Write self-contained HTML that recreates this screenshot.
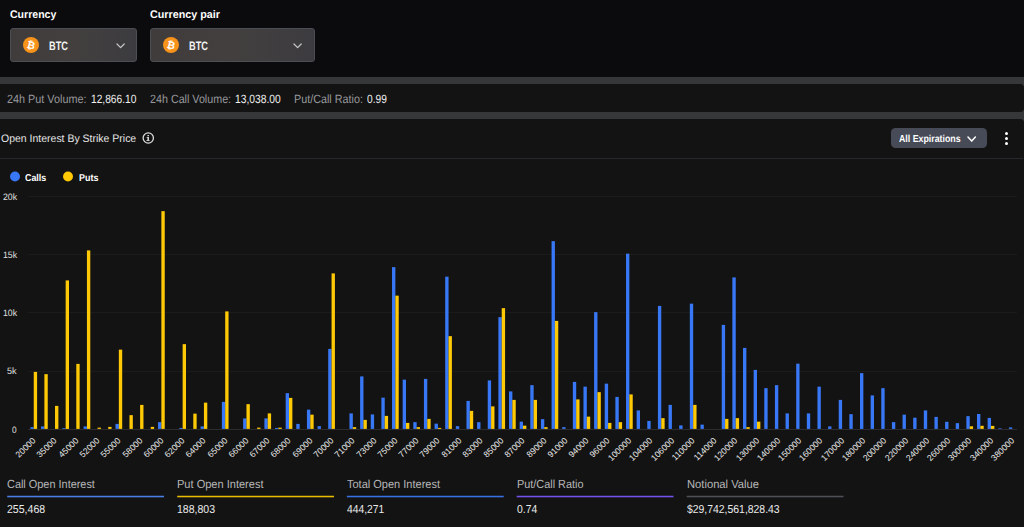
<!DOCTYPE html><html><head><meta charset="utf-8"><title>Open Interest By Strike Price</title><style>
html,body{margin:0;padding:0;}
body{width:1024px;height:527px;overflow:hidden;background:#0b0b0d;font-family:"Liberation Sans",sans-serif;position:relative;}
.t{position:absolute;white-space:nowrap;transform-origin:0 50%;line-height:16px;text-rendering:geometricPrecision;}
.a{position:absolute;}
.sel{position:absolute;top:27.8px;height:33.9px;box-sizing:border-box;border:1px solid #4c4e56;border-radius:3px;
background:linear-gradient(90deg,#3f3c3b 0%,#433f3e 45%,#403e3f 70%,#3c3b3f 100%);}
.b{position:absolute;width:3.35px;}
.c{background:#3878f6;}
.p{background:#ffca05;}
.xl{position:absolute;white-space:nowrap;font-size:8.6px;line-height:10px;color:#ececec;transform-origin:100% 50%;transform:rotate(-45deg);text-align:right;}

</style></head><body>
<div class="a" style="left:0;top:77px;width:1024px;height:450px;background:#363739;"></div>
<div class="a" style="left:0;top:84px;width:1023.8px;height:28px;background:#131313;border-radius:0 4px 4px 0;"></div>
<div class="a" style="left:0;top:118.6px;width:1023.8px;height:409px;background:#131313;border-radius:0 4px 0 0;"></div>
<div class="t" style="left:10.40px;top:7px;font-size:11.0px;color:#fff;font-weight:700;transform:scaleX(0.9587);">Currency</div>
<div class="t" style="left:149.70px;top:7px;font-size:11.0px;color:#fff;font-weight:700;transform:scaleX(0.9773);">Currency pair</div>
<div class="sel" style="left:10px;width:127.3px;"></div>
<div class="sel" style="left:149.7px;width:165.2px;"></div>
<svg class="a" style="left:23.4px;top:36.6px" width="16" height="16" viewBox="0 0 16 16"><circle cx="8" cy="8" r="8" fill="#f7931a"/><text x="8.2" y="11.6" font-family="Liberation Sans, sans-serif" font-size="10" font-weight="700" fill="#fff" text-anchor="middle" transform="rotate(14 8 8)">₿</text></svg>
<svg class="a" style="left:163.0px;top:36.6px" width="16" height="16" viewBox="0 0 16 16"><circle cx="8" cy="8" r="8" fill="#f7931a"/><text x="8.2" y="11.6" font-family="Liberation Sans, sans-serif" font-size="10" font-weight="700" fill="#fff" text-anchor="middle" transform="rotate(14 8 8)">₿</text></svg>
<div class="t" style="left:48.90px;top:38px;font-size:12.2px;color:#f2f2f2;font-weight:700;transform:scaleX(0.7586);">BTC</div>
<div class="t" style="left:188.70px;top:38px;font-size:12.2px;color:#f2f2f2;font-weight:700;transform:scaleX(0.7586);">BTC</div>
<svg class="a" style="left:114.7px;top:42.0px" width="11.2" height="7.6" viewBox="-2 -2 11.2 7.6"><path d="M0 0 L3.6 3.6 L7.2 0" fill="none" stroke="#c6c6ca" stroke-width="1.25" stroke-linecap="round" stroke-linejoin="round"/></svg>
<svg class="a" style="left:292.4px;top:42.0px" width="11.2" height="7.6" viewBox="-2 -2 11.2 7.6"><path d="M0 0 L3.6 3.6 L7.2 0" fill="none" stroke="#c6c6ca" stroke-width="1.25" stroke-linecap="round" stroke-linejoin="round"/></svg>
<div class="t" style="left:7.40px;top:91px;font-size:12px;color:#96979b;transform:scaleX(0.9028);">24h Put Volume:</div>
<div class="t" style="left:91.40px;top:91px;font-size:12px;color:#f0f0f0;transform:scaleX(0.8486);">12,866.10</div>
<div class="t" style="left:149.60px;top:91px;font-size:12px;color:#96979b;transform:scaleX(0.8940);">24h Call Volume:</div>
<div class="t" style="left:235.20px;top:91px;font-size:12px;color:#f0f0f0;transform:scaleX(0.8560);">13,038.00</div>
<div class="t" style="left:294.10px;top:91px;font-size:12px;color:#96979b;transform:scaleX(0.8983);">Put/Call Ratio:</div>
<div class="t" style="left:366.50px;top:91px;font-size:12px;color:#f0f0f0;transform:scaleX(0.8478);">0.99</div>
<div class="t" style="left:1.20px;top:131px;font-size:10.9px;color:#e6e6e6;transform:scaleX(0.9628);">Open Interest By Strike Price</div>
<svg class="a" style="left:140px;top:130px" width="17" height="17" viewBox="140 130 17 17"><circle cx="148.27" cy="138.0" r="5.15" fill="none" stroke="#dcdcdc" stroke-width="1.3"/><path d="M147.45 135.05h1.5v1.25h-1.5z M146.6 136.95h2.35v3.2h0.75v0.85h-3.3v-0.85h1.05v-2.4h-0.85z" fill="#dcdcdc"/></svg>
<div class="a" style="left:891.3px;top:127.9px;width:95.6px;height:20.3px;background:#474b58;border-radius:4.5px;"></div>
<div class="t" style="left:898.60px;top:132px;font-size:10.2px;color:#fff;font-weight:700;transform:scaleX(0.8636);">All Expirations</div>
<svg class="a" style="left:966.3px;top:134.64999999999998px" width="11.4" height="8.1" viewBox="-2 -2 11.4 8.1"><path d="M0 0 L3.7 4.1 L7.4 0" fill="none" stroke="#fff" stroke-width="1.5" stroke-linecap="round" stroke-linejoin="round"/></svg>
<div class="a" style="left:1004.8px;top:131.7px;width:3px;height:3px;border-radius:50%;background:#fff;"></div>
<div class="a" style="left:1004.8px;top:136.6px;width:3px;height:3px;border-radius:50%;background:#fff;"></div>
<div class="a" style="left:1004.8px;top:141.5px;width:3px;height:3px;border-radius:50%;background:#fff;"></div>
<div class="a" style="left:0;top:158px;width:1022.5px;height:1px;background:#27282b;"></div>
<svg class="a" style="left:0;top:168px" width="110" height="18" viewBox="0 168 110 18"><circle cx="15" cy="176.56" r="4.95" fill="#3878f6"/><circle cx="68" cy="176.56" r="4.95" fill="#ffca05"/></svg>
<div class="t" style="left:25.00px;top:171px;font-size:9.9px;color:#fff;font-weight:700;transform:scaleX(0.8968);">Calls</div>
<div class="t" style="left:78.70px;top:171px;font-size:9.9px;color:#fff;font-weight:700;transform:scaleX(0.9052);">Puts</div>
<div class="a" style="left:28px;top:196.00px;width:989px;height:1px;background:#1b1b1b;"></div>
<div class="t" style="left:2.50px;top:189px;font-size:9.2px;color:#e0e0e0;transform:scaleX(0.9519);">20k</div>
<div class="a" style="left:28px;top:254.20px;width:989px;height:1px;background:#1b1b1b;"></div>
<div class="t" style="left:2.50px;top:247px;font-size:9.2px;color:#e0e0e0;transform:scaleX(0.9519);">15k</div>
<div class="a" style="left:28px;top:312.40px;width:989px;height:1px;background:#1b1b1b;"></div>
<div class="t" style="left:2.50px;top:305px;font-size:9.2px;color:#e0e0e0;transform:scaleX(0.9519);">10k</div>
<div class="a" style="left:28px;top:370.60px;width:989px;height:1px;background:#1b1b1b;"></div>
<div class="t" style="left:7.00px;top:363px;font-size:9.2px;color:#e0e0e0;transform:scaleX(0.9893);">5k</div>
<div class="t" style="left:12.00px;top:422px;font-size:9.2px;color:#e0e0e0;transform:scaleX(0.9003);">0</div>
<div class="a" style="left:28px;top:428.90px;width:989px;height:1px;background:#2c2c2e;"></div>
<svg class="a" style="left:0;top:190px" width="1024" height="240" viewBox="0 190 1024 240">
<rect x="30.40" y="427.15" width="3.35" height="1.75" fill="#3878f6"/>
<rect x="33.75" y="371.90" width="3.35" height="57.00" fill="#ffca05"/>
<rect x="41.04" y="426.40" width="3.35" height="2.50" fill="#3878f6"/>
<rect x="44.39" y="374.15" width="3.35" height="54.75" fill="#ffca05"/>
<rect x="55.02" y="405.90" width="3.35" height="23.00" fill="#ffca05"/>
<rect x="62.31" y="428.15" width="3.35" height="0.75" fill="#3878f6"/>
<rect x="65.66" y="280.40" width="3.35" height="148.50" fill="#ffca05"/>
<rect x="76.29" y="363.90" width="3.35" height="65.00" fill="#ffca05"/>
<rect x="83.58" y="426.40" width="3.35" height="2.50" fill="#3878f6"/>
<rect x="86.93" y="250.40" width="3.35" height="178.50" fill="#ffca05"/>
<rect x="97.57" y="427.65" width="3.35" height="1.25" fill="#ffca05"/>
<rect x="108.20" y="426.90" width="3.35" height="2.00" fill="#ffca05"/>
<rect x="115.49" y="423.90" width="3.35" height="5.00" fill="#3878f6"/>
<rect x="118.84" y="349.65" width="3.35" height="79.25" fill="#ffca05"/>
<rect x="129.47" y="415.15" width="3.35" height="13.75" fill="#ffca05"/>
<rect x="140.11" y="404.90" width="3.35" height="24.00" fill="#ffca05"/>
<rect x="150.75" y="426.90" width="3.35" height="2.00" fill="#ffca05"/>
<rect x="158.03" y="422.15" width="3.35" height="6.75" fill="#3878f6"/>
<rect x="161.38" y="211.15" width="3.35" height="217.75" fill="#ffca05"/>
<rect x="179.30" y="427.90" width="3.35" height="1.00" fill="#3878f6"/>
<rect x="182.65" y="344.15" width="3.35" height="84.75" fill="#ffca05"/>
<rect x="193.29" y="413.65" width="3.35" height="15.25" fill="#ffca05"/>
<rect x="200.58" y="426.40" width="3.35" height="2.50" fill="#3878f6"/>
<rect x="203.93" y="402.65" width="3.35" height="26.25" fill="#ffca05"/>
<rect x="221.85" y="401.90" width="3.35" height="27.00" fill="#3878f6"/>
<rect x="225.20" y="311.40" width="3.35" height="117.50" fill="#ffca05"/>
<rect x="243.12" y="418.40" width="3.35" height="10.50" fill="#3878f6"/>
<rect x="246.47" y="404.15" width="3.35" height="24.75" fill="#ffca05"/>
<rect x="257.11" y="427.65" width="3.35" height="1.25" fill="#ffca05"/>
<rect x="264.39" y="418.40" width="3.35" height="10.50" fill="#3878f6"/>
<rect x="267.74" y="413.40" width="3.35" height="15.50" fill="#ffca05"/>
<rect x="275.03" y="427.90" width="3.35" height="1.00" fill="#3878f6"/>
<rect x="278.38" y="427.65" width="3.35" height="1.25" fill="#ffca05"/>
<rect x="285.66" y="393.15" width="3.35" height="35.75" fill="#3878f6"/>
<rect x="289.01" y="397.90" width="3.35" height="31.00" fill="#ffca05"/>
<rect x="296.30" y="423.90" width="3.35" height="5.00" fill="#3878f6"/>
<rect x="306.94" y="409.65" width="3.35" height="19.25" fill="#3878f6"/>
<rect x="310.29" y="414.65" width="3.35" height="14.25" fill="#ffca05"/>
<rect x="317.57" y="426.15" width="3.35" height="2.75" fill="#3878f6"/>
<rect x="328.21" y="348.90" width="3.35" height="80.00" fill="#3878f6"/>
<rect x="331.56" y="273.40" width="3.35" height="155.50" fill="#ffca05"/>
<rect x="349.48" y="413.40" width="3.35" height="15.50" fill="#3878f6"/>
<rect x="352.83" y="427.15" width="3.35" height="1.75" fill="#ffca05"/>
<rect x="360.12" y="376.40" width="3.35" height="52.50" fill="#3878f6"/>
<rect x="363.47" y="419.90" width="3.35" height="9.00" fill="#ffca05"/>
<rect x="370.75" y="414.40" width="3.35" height="14.50" fill="#3878f6"/>
<rect x="381.39" y="397.65" width="3.35" height="31.25" fill="#3878f6"/>
<rect x="384.74" y="415.90" width="3.35" height="13.00" fill="#ffca05"/>
<rect x="392.02" y="267.15" width="3.35" height="161.75" fill="#3878f6"/>
<rect x="395.37" y="295.65" width="3.35" height="133.25" fill="#ffca05"/>
<rect x="402.66" y="379.65" width="3.35" height="49.25" fill="#3878f6"/>
<rect x="406.01" y="422.90" width="3.35" height="6.00" fill="#ffca05"/>
<rect x="413.30" y="422.15" width="3.35" height="6.75" fill="#3878f6"/>
<rect x="416.65" y="427.15" width="3.35" height="1.75" fill="#ffca05"/>
<rect x="423.93" y="378.90" width="3.35" height="50.00" fill="#3878f6"/>
<rect x="427.28" y="418.90" width="3.35" height="10.00" fill="#ffca05"/>
<rect x="434.57" y="423.65" width="3.35" height="5.25" fill="#3878f6"/>
<rect x="437.92" y="427.90" width="3.35" height="1.00" fill="#ffca05"/>
<rect x="445.20" y="276.65" width="3.35" height="152.25" fill="#3878f6"/>
<rect x="448.55" y="336.15" width="3.35" height="92.75" fill="#ffca05"/>
<rect x="455.84" y="426.15" width="3.35" height="2.75" fill="#3878f6"/>
<rect x="466.48" y="400.90" width="3.35" height="28.00" fill="#3878f6"/>
<rect x="469.83" y="410.90" width="3.35" height="18.00" fill="#ffca05"/>
<rect x="477.11" y="422.15" width="3.35" height="6.75" fill="#3878f6"/>
<rect x="487.75" y="380.40" width="3.35" height="48.50" fill="#3878f6"/>
<rect x="491.10" y="406.40" width="3.35" height="22.50" fill="#ffca05"/>
<rect x="498.38" y="317.15" width="3.35" height="111.75" fill="#3878f6"/>
<rect x="501.73" y="308.15" width="3.35" height="120.75" fill="#ffca05"/>
<rect x="509.02" y="391.40" width="3.35" height="37.50" fill="#3878f6"/>
<rect x="512.37" y="399.90" width="3.35" height="29.00" fill="#ffca05"/>
<rect x="519.66" y="421.65" width="3.35" height="7.25" fill="#3878f6"/>
<rect x="523.01" y="425.65" width="3.35" height="3.25" fill="#ffca05"/>
<rect x="530.29" y="385.15" width="3.35" height="43.75" fill="#3878f6"/>
<rect x="533.64" y="399.90" width="3.35" height="29.00" fill="#ffca05"/>
<rect x="540.93" y="419.15" width="3.35" height="9.75" fill="#3878f6"/>
<rect x="544.28" y="427.15" width="3.35" height="1.75" fill="#ffca05"/>
<rect x="551.56" y="241.15" width="3.35" height="187.75" fill="#3878f6"/>
<rect x="554.91" y="320.90" width="3.35" height="108.00" fill="#ffca05"/>
<rect x="562.20" y="427.15" width="3.35" height="1.75" fill="#3878f6"/>
<rect x="572.84" y="381.90" width="3.35" height="47.00" fill="#3878f6"/>
<rect x="576.19" y="399.40" width="3.35" height="29.50" fill="#ffca05"/>
<rect x="583.47" y="386.65" width="3.35" height="42.25" fill="#3878f6"/>
<rect x="586.82" y="416.65" width="3.35" height="12.25" fill="#ffca05"/>
<rect x="594.11" y="312.15" width="3.35" height="116.75" fill="#3878f6"/>
<rect x="597.46" y="392.15" width="3.35" height="36.75" fill="#ffca05"/>
<rect x="604.74" y="383.65" width="3.35" height="45.25" fill="#3878f6"/>
<rect x="608.09" y="422.90" width="3.35" height="6.00" fill="#ffca05"/>
<rect x="615.38" y="396.90" width="3.35" height="32.00" fill="#3878f6"/>
<rect x="618.73" y="422.15" width="3.35" height="6.75" fill="#ffca05"/>
<rect x="626.02" y="253.65" width="3.35" height="175.25" fill="#3878f6"/>
<rect x="629.37" y="394.40" width="3.35" height="34.50" fill="#ffca05"/>
<rect x="636.65" y="410.40" width="3.35" height="18.50" fill="#3878f6"/>
<rect x="647.29" y="420.90" width="3.35" height="8.00" fill="#3878f6"/>
<rect x="657.92" y="305.90" width="3.35" height="123.00" fill="#3878f6"/>
<rect x="661.27" y="418.15" width="3.35" height="10.75" fill="#ffca05"/>
<rect x="668.56" y="404.90" width="3.35" height="24.00" fill="#3878f6"/>
<rect x="679.20" y="425.40" width="3.35" height="3.50" fill="#3878f6"/>
<rect x="689.83" y="303.65" width="3.35" height="125.25" fill="#3878f6"/>
<rect x="693.18" y="404.90" width="3.35" height="24.00" fill="#ffca05"/>
<rect x="700.47" y="424.65" width="3.35" height="4.25" fill="#3878f6"/>
<rect x="721.74" y="324.90" width="3.35" height="104.00" fill="#3878f6"/>
<rect x="725.09" y="418.90" width="3.35" height="10.00" fill="#ffca05"/>
<rect x="732.38" y="277.40" width="3.35" height="151.50" fill="#3878f6"/>
<rect x="735.73" y="418.15" width="3.35" height="10.75" fill="#ffca05"/>
<rect x="743.01" y="347.90" width="3.35" height="81.00" fill="#3878f6"/>
<rect x="746.36" y="427.15" width="3.35" height="1.75" fill="#ffca05"/>
<rect x="753.65" y="369.90" width="3.35" height="59.00" fill="#3878f6"/>
<rect x="757.00" y="421.65" width="3.35" height="7.25" fill="#ffca05"/>
<rect x="764.28" y="388.15" width="3.35" height="40.75" fill="#3878f6"/>
<rect x="774.92" y="385.15" width="3.35" height="43.75" fill="#3878f6"/>
<rect x="785.56" y="413.40" width="3.35" height="15.50" fill="#3878f6"/>
<rect x="796.19" y="363.65" width="3.35" height="65.25" fill="#3878f6"/>
<rect x="806.83" y="413.40" width="3.35" height="15.50" fill="#3878f6"/>
<rect x="817.46" y="386.65" width="3.35" height="42.25" fill="#3878f6"/>
<rect x="828.10" y="426.40" width="3.35" height="2.50" fill="#3878f6"/>
<rect x="838.74" y="399.90" width="3.35" height="29.00" fill="#3878f6"/>
<rect x="849.37" y="414.15" width="3.35" height="14.75" fill="#3878f6"/>
<rect x="860.01" y="373.15" width="3.35" height="55.75" fill="#3878f6"/>
<rect x="870.64" y="395.40" width="3.35" height="33.50" fill="#3878f6"/>
<rect x="881.28" y="388.15" width="3.35" height="40.75" fill="#3878f6"/>
<rect x="891.92" y="422.15" width="3.35" height="6.75" fill="#3878f6"/>
<rect x="902.55" y="414.65" width="3.35" height="14.25" fill="#3878f6"/>
<rect x="913.19" y="417.70" width="3.35" height="11.20" fill="#3878f6"/>
<rect x="923.82" y="410.40" width="3.35" height="18.50" fill="#3878f6"/>
<rect x="934.46" y="416.90" width="3.35" height="12.00" fill="#3878f6"/>
<rect x="945.10" y="421.80" width="3.35" height="7.10" fill="#3878f6"/>
<rect x="955.73" y="423.15" width="3.35" height="5.75" fill="#3878f6"/>
<rect x="966.37" y="416.15" width="3.35" height="12.75" fill="#3878f6"/>
<rect x="969.72" y="426.30" width="3.35" height="2.60" fill="#ffca05"/>
<rect x="977.00" y="414.00" width="3.35" height="14.90" fill="#3878f6"/>
<rect x="980.35" y="425.80" width="3.35" height="3.10" fill="#ffca05"/>
<rect x="987.64" y="417.90" width="3.35" height="11.00" fill="#3878f6"/>
<rect x="990.99" y="425.90" width="3.35" height="3.00" fill="#ffca05"/>
<rect x="998.28" y="428.30" width="3.35" height="0.60" fill="#3878f6"/>
<rect x="1008.91" y="427.40" width="3.35" height="1.50" fill="#3878f6"/>
</svg>
<div class="xl" style="right:989.95px;top:434.30px">20000</div>
<div class="xl" style="right:968.68px;top:434.30px">35000</div>
<div class="xl" style="right:947.41px;top:434.30px">45000</div>
<div class="xl" style="right:926.13px;top:434.30px">52000</div>
<div class="xl" style="right:904.86px;top:434.30px">55000</div>
<div class="xl" style="right:883.59px;top:434.30px">58000</div>
<div class="xl" style="right:862.32px;top:434.30px">60000</div>
<div class="xl" style="right:841.05px;top:434.30px">62000</div>
<div class="xl" style="right:819.77px;top:434.30px">64000</div>
<div class="xl" style="right:798.50px;top:434.30px">65000</div>
<div class="xl" style="right:777.23px;top:434.30px">66000</div>
<div class="xl" style="right:755.96px;top:434.30px">67000</div>
<div class="xl" style="right:734.69px;top:434.30px">68000</div>
<div class="xl" style="right:713.41px;top:434.30px">69000</div>
<div class="xl" style="right:692.14px;top:434.30px">70000</div>
<div class="xl" style="right:670.87px;top:434.30px">71000</div>
<div class="xl" style="right:649.60px;top:434.30px">73000</div>
<div class="xl" style="right:628.33px;top:434.30px">75000</div>
<div class="xl" style="right:607.05px;top:434.30px">77000</div>
<div class="xl" style="right:585.78px;top:434.30px">79000</div>
<div class="xl" style="right:564.51px;top:434.30px">81000</div>
<div class="xl" style="right:543.24px;top:434.30px">83000</div>
<div class="xl" style="right:521.97px;top:434.30px">85000</div>
<div class="xl" style="right:500.69px;top:434.30px">87000</div>
<div class="xl" style="right:479.42px;top:434.30px">89000</div>
<div class="xl" style="right:458.15px;top:434.30px">91000</div>
<div class="xl" style="right:436.88px;top:434.30px">94000</div>
<div class="xl" style="right:415.61px;top:434.30px">96000</div>
<div class="xl" style="right:394.33px;top:434.30px">100000</div>
<div class="xl" style="right:373.06px;top:434.30px">104000</div>
<div class="xl" style="right:351.79px;top:434.30px">106000</div>
<div class="xl" style="right:330.52px;top:434.30px">110000</div>
<div class="xl" style="right:309.25px;top:434.30px">114000</div>
<div class="xl" style="right:287.97px;top:434.30px">120000</div>
<div class="xl" style="right:266.70px;top:434.30px">130000</div>
<div class="xl" style="right:245.43px;top:434.30px">140000</div>
<div class="xl" style="right:224.16px;top:434.30px">150000</div>
<div class="xl" style="right:202.89px;top:434.30px">160000</div>
<div class="xl" style="right:181.61px;top:434.30px">170000</div>
<div class="xl" style="right:160.34px;top:434.30px">180000</div>
<div class="xl" style="right:139.07px;top:434.30px">200000</div>
<div class="xl" style="right:117.80px;top:434.30px">220000</div>
<div class="xl" style="right:96.53px;top:434.30px">240000</div>
<div class="xl" style="right:75.25px;top:434.30px">260000</div>
<div class="xl" style="right:53.98px;top:434.30px">300000</div>
<div class="xl" style="right:32.71px;top:434.30px">340000</div>
<div class="xl" style="right:11.44px;top:434.30px">380000</div>
<div class="t" style="left:7.20px;top:477px;font-size:11.7px;color:#b6b6b8;transform:scaleX(0.9332);">Call Open Interest</div>
<svg class="a" style="left:0;top:494px" width="1024" height="5" viewBox="0 494 1024 5"><rect x="7.20" y="495.75" width="156.8" height="1.55" fill="#4a80e6"/></svg>
<div class="t" style="left:7.20px;top:502px;font-size:11.6px;color:#ececec;transform:scaleX(0.9091);">255,468</div>
<div class="t" style="left:177.20px;top:477px;font-size:11.7px;color:#b6b6b8;transform:scaleX(0.9443);">Put Open Interest</div>
<svg class="a" style="left:0;top:494px" width="1024" height="5" viewBox="0 494 1024 5"><rect x="177.20" y="495.75" width="156.8" height="1.55" fill="#e8ba00"/></svg>
<div class="t" style="left:177.20px;top:502px;font-size:11.6px;color:#ececec;transform:scaleX(0.9067);">188,803</div>
<div class="t" style="left:346.90px;top:477px;font-size:11.7px;color:#b6b6b8;transform:scaleX(0.9418);">Total Open Interest</div>
<svg class="a" style="left:0;top:494px" width="1024" height="5" viewBox="0 494 1024 5"><rect x="346.90" y="495.75" width="156.8" height="1.55" fill="#3672e4"/></svg>
<div class="t" style="left:346.90px;top:502px;font-size:11.6px;color:#ececec;transform:scaleX(0.8876);">444,271</div>
<div class="t" style="left:516.70px;top:477px;font-size:11.7px;color:#b6b6b8;transform:scaleX(0.9307);">Put/Call Ratio</div>
<svg class="a" style="left:0;top:494px" width="1024" height="5" viewBox="0 494 1024 5"><rect x="516.70" y="495.75" width="156.8" height="1.55" fill="#7452ee"/></svg>
<div class="t" style="left:516.70px;top:502px;font-size:11.6px;color:#ececec;transform:scaleX(0.8952);">0.74</div>
<div class="t" style="left:686.70px;top:477px;font-size:11.7px;color:#b6b6b8;transform:scaleX(0.9581);">Notional Value</div>
<svg class="a" style="left:0;top:494px" width="1024" height="5" viewBox="0 494 1024 5"><rect x="686.70" y="495.75" width="156.8" height="1.55" fill="#4e4f57"/></svg>
<div class="t" style="left:686.70px;top:502px;font-size:11.6px;color:#ececec;transform:scaleX(0.8977);">$29,742,561,828.43</div>
</body></html>
